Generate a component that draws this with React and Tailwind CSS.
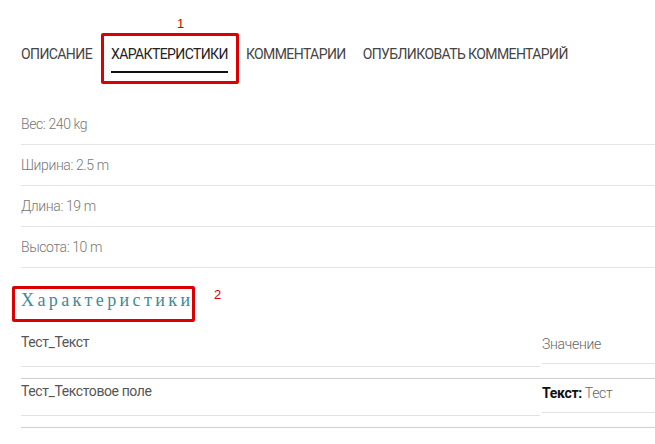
import React from 'react';

const tabs = ['ОПИСАНИЕ', 'ХАРАКТЕРИСТИКИ', 'КОММЕНТАРИИ', 'ОПУБЛИКОВАТЬ КОММЕНТАРИЙ'];

const specs = ['Вес: 240 kg', 'Ширина: 2.5 m', 'Длина: 19 m', 'Высота: 10 m'];

const rows = [
  { name: 'Тест_Текст', value: <span className="text-[#666] font-light">Значение</span> },
  {
    name: 'Тест_Текстовое поле',
    value: (
      <span className="text-[#666] font-light">
        <b className="font-bold text-[#111]">Текст:</b> Тест
      </span>
    ),
  },
];

export default function App() {
  return (
    <div className="w-[655px] h-[444px] bg-white overflow-hidden font-['Roboto',sans-serif]">
      {/* Tabs */}
      <div className="flex items-center pl-[21px] pt-[36px]">
        {tabs.map((tab, i) => {
          const active = i === 1;
          return (
            <div
              key={tab}
              className={`relative flex flex-col items-center ${i === 0 ? 'mr-[9px]' : active ? 'mr-[7px]' : 'mr-[17px]'} ${
                active ? 'border-[3px] border-[#dc0000] rounded-[2px] pl-[7px] pr-[8px] pt-[8px] pb-[8px] -my-[3px]' : ''
              }`}
            >
              {active && (
                <span className="absolute -top-[22px] left-[73px] text-[13px] text-[#d40000] font-['Liberation_Sans',sans-serif]">
                  1
                </span>
              )}
              <span
                className={`text-[14px] leading-[20px] tracking-[-0.6px] ${
                  active ? 'text-[#222]' : 'text-[#444]'
                }`}
              >
                {tab}
              </span>
              <span className={`h-[2px] w-full mt-[7px] ${active ? 'bg-[#111]' : 'bg-transparent'}`} />
            </div>
          );
        })}
      </div>

      {/* Specs list */}
      <div className="pl-[21px] mt-[23px]">
        {specs.map((s) => (
          <div
            key={s}
            className="h-[41px] flex items-center border-b border-[#e4e4e4] text-[14px] tracking-[-0.4px] font-light text-[#777]"
          >
            {s}
          </div>
        ))}
      </div>

      {/* Heading */}
      <div className="flex items-start pl-[12px] mt-[18px]">
        <div className="border-[3px] border-[#dc0000] rounded-[2px] w-[183px] h-[36px] pl-[6px]">
          <span className="font-['Liberation_Serif',serif] text-[18px] leading-[20px] tracking-[3.4px] text-[#3a8c98]">
            Характеристики
          </span>
        </div>
        <span className="ml-[19px] -mt-[1px] text-[13px] text-[#d40000] font-['Liberation_Sans',sans-serif]">2</span>
      </div>

      {/* Table */}
      <div className="pl-[21px] mt-[8px]">
        {rows.map((r) => (
          <div key={r.name} className="flex items-start border-b border-[#cfcfcf] pb-[11px]">
            <div className="flex-1 pt-[2px] h-[37px] border-b border-[#e2e2e2] text-[14px] leading-[20px] tracking-[-0.4px] text-[#555]">
              {r.name}
            </div>
            <div className="w-[113px] ml-[2px] pt-[4px] h-[34px] border-b border-[#e2e2e2] text-[14px] leading-[20px] tracking-[-0.3px]">
              {r.value}
            </div>
          </div>
        ))}
      </div>
    </div>
  );
}
